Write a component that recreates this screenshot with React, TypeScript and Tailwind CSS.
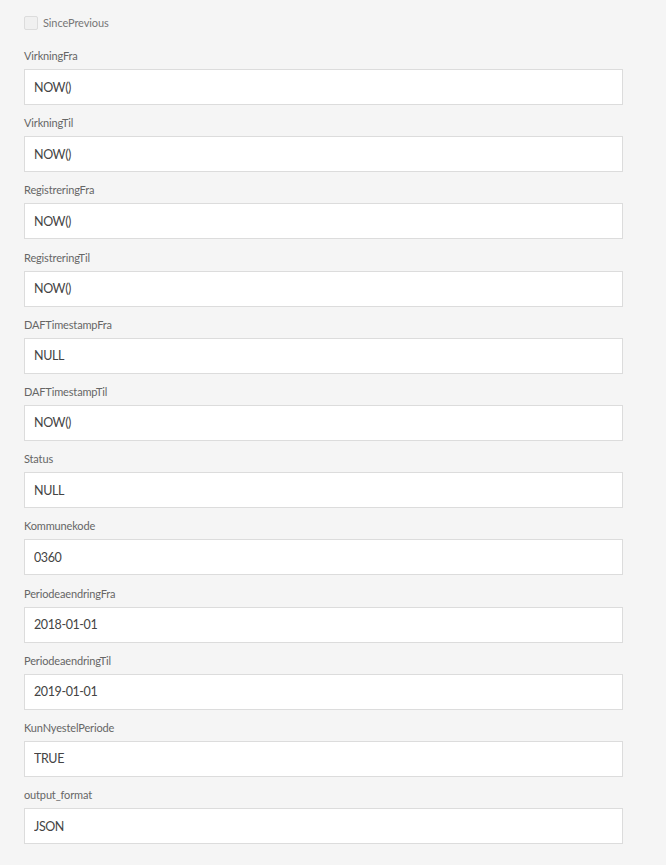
const fields: { label: string; value: string }[] = [
  { label: "VirkningFra", value: "NOW()" },
  { label: "VirkningTil", value: "NOW()" },
  { label: "RegistreringFra", value: "NOW()" },
  { label: "RegistreringTil", value: "NOW()" },
  { label: "DAFTimestampFra", value: "NULL" },
  { label: "DAFTimestampTil", value: "NOW()" },
  { label: "Status", value: "NULL" },
  { label: "Kommunekode", value: "0360" },
  { label: "PeriodeaendringFra", value: "2018-01-01" },
  { label: "PeriodeaendringTil", value: "2019-01-01" },
  { label: "KunNyestelPeriode", value: "TRUE" },
  { label: "output_format", value: "JSON" },
];

export default function App() {
  return (
    <div className="min-h-[865px] bg-[#f5f5f5] px-6 pt-4 pb-6 font-['Lato',sans-serif]">
      <label className="flex h-[14px] items-center gap-[5px]">
        <span className="h-[14px] w-[14px] rounded-[2px] border border-[#dcdcdc] bg-[#f0f0f0]" />
        <span className="text-[11px] tracking-[-0.1px] text-[#777]">SincePrevious</span>
      </label>
      <div className="mt-[19px] flex w-[599px] flex-col gap-[11.2px]">
        {fields.map((f) => (
          <div key={f.label} className="flex flex-col">
            <div className="mb-[6px] h-[14px] text-[11px] leading-[14px] tracking-[-0.15px] text-[#666]">{f.label}</div>
            <input
              readOnly
              value={f.value}
              className="h-9 w-full border border-[#dcdcdc] bg-white px-[9px] text-[12.5px] tracking-[-0.4px] text-[#444] outline-none"
            />
          </div>
        ))}
      </div>
    </div>
  );
}
